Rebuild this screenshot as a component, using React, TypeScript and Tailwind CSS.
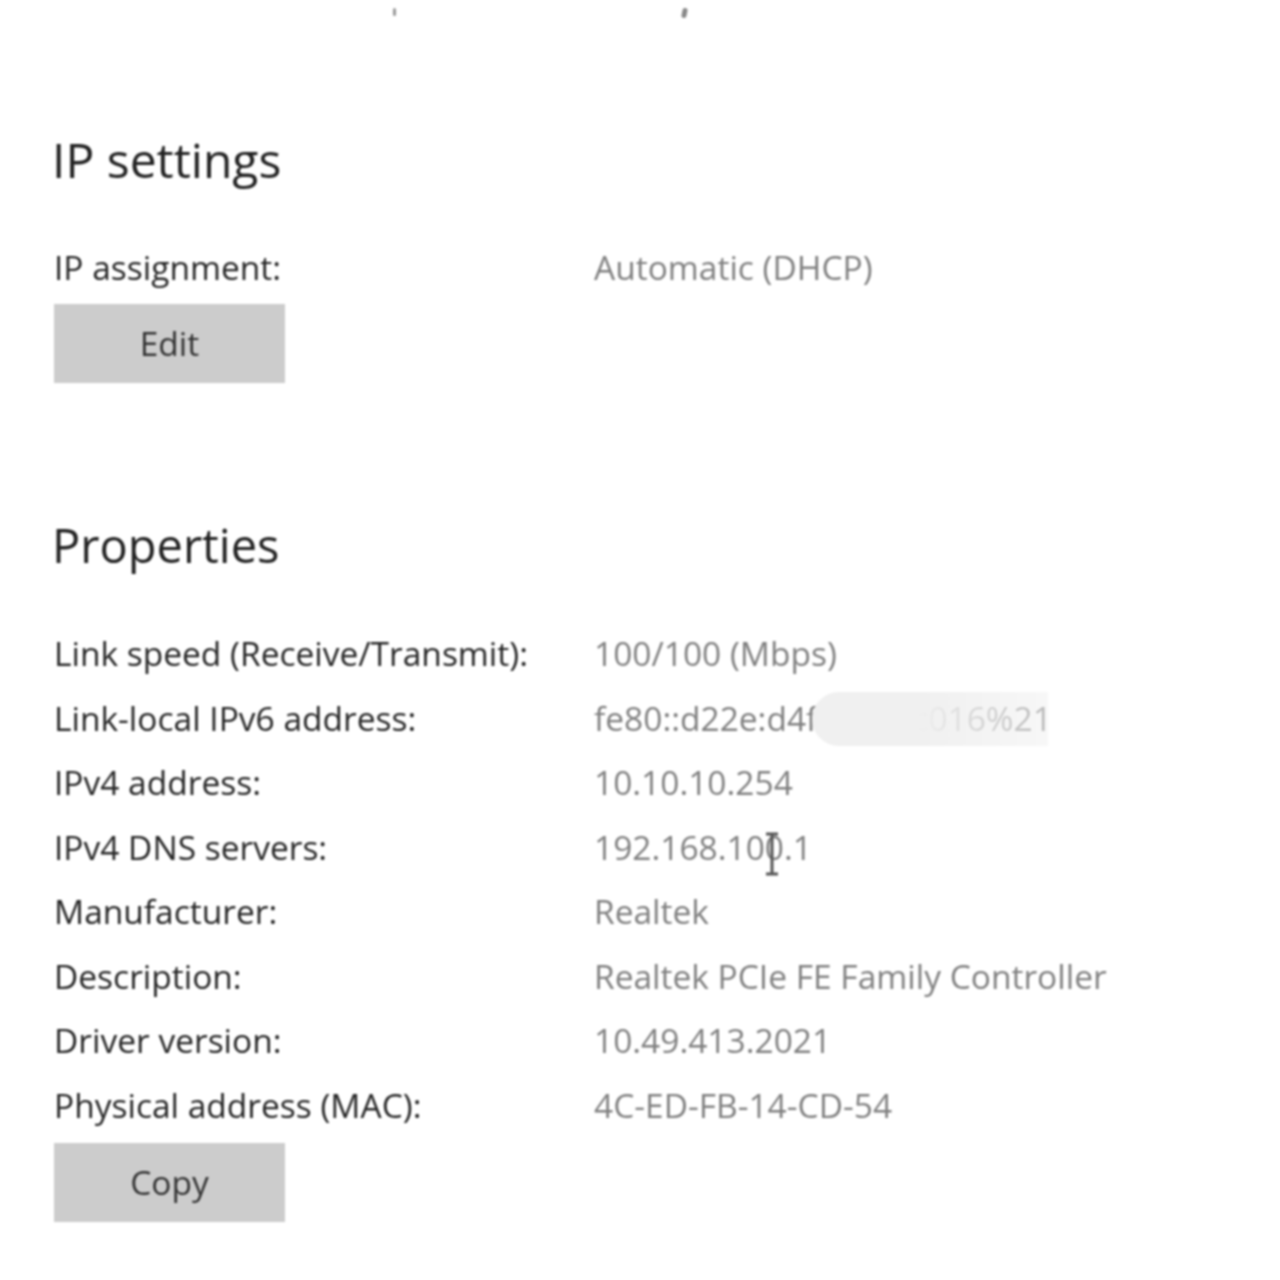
import React from "react";

const rows: { label: string; value: string }[] = [
  { label: "Link speed (Receive/Transmit):", value: "100/100 (Mbps)" },
  { label: "Link-local IPv6 address:", value: "fe80::d22e:d4f1:9ab:c016%21" },
  { label: "IPv4 address:", value: "10.10.10.254" },
  { label: "IPv4 DNS servers:", value: "192.168.100.1" },
  { label: "Manufacturer:", value: "Realtek" },
  { label: "Description:", value: "Realtek PCIe FE Family Controller" },
  { label: "Driver version:", value: "10.49.413.2021" },
  { label: "Physical address (MAC):", value: "4C-ED-FB-14-CD-54" },
];

function Row({ label, value, index }: { label: string; value: string; index: number }) {
  return (
    <div className="relative flex h-[64.5px] items-center text-[33.5px]">
      <span className="w-[540px] shrink-0 text-[#262626]">{label}</span>
      <span className="whitespace-nowrap text-[#808080]">{value}</span>
      {index === 1 && (
        <div className="absolute left-[758px] top-[6px] h-[54px] w-[236px] rounded-l-[30px] bg-linear-to-r from-[#f0f0f0] via-[#f0f0f0] via-45% to-[#f0f0f0]/50" />
      )}
      {index === 3 && (
        <svg
          className="absolute left-[708px] top-[16px]"
          width="20"
          height="46"
          viewBox="0 0 20 46"
          fill="none"
          stroke="#555"
          strokeWidth="3"
        >
          <path d="M4 3h12M10 3v40M4 43h12" />
        </svg>
      )}
    </div>
  );
}

function GrayButton({ children }: { children: React.ReactNode }) {
  return (
    <button className="flex h-[79px] w-[231px] items-center justify-center bg-[#cccccc] text-[33.5px] text-[#333]">
      {children}
    </button>
  );
}

export default function App() {
  return (
    <div
      className="relative min-h-[1280px] w-[1280px] bg-white pl-[52px] pt-[130px] blur-[0.8px]"
      style={{ fontFamily: '"Open Sans", "Noto Sans", sans-serif' }}
    >
      <div className="absolute left-[393px] top-[8px] h-[8px] w-[3px] rounded bg-[#999]" />
      <div className="absolute left-[682px] top-[8px] h-[10px] w-[5px] rotate-12 rounded bg-[#888]" />

      <h1 className="h-[60px] text-[48px] leading-[60px] text-[#222]">IP settings</h1>

      <div className="mt-[45px] flex h-[64px] items-center pl-[2px] text-[33.5px]">
        <span className="w-[540px] shrink-0 text-[#262626]">IP assignment:</span>
        <span className="text-[#808080]">Automatic (DHCP)</span>
      </div>
      <div className="ml-[2px] mt-[5px]">
        <GrayButton>Edit</GrayButton>
      </div>

      <h2 className="mt-[132px] h-[60px] text-[47px] leading-[60px] text-[#222]">Properties</h2>

      <div className="mt-[46px] pl-[2px]">
        {rows.map((r, i) => (
          <Row key={r.label} label={r.label} value={r.value} index={i} />
        ))}
      </div>

      <div className="ml-[2px] mt-[6px]">
        <GrayButton>Copy</GrayButton>
      </div>
    </div>
  );
}
